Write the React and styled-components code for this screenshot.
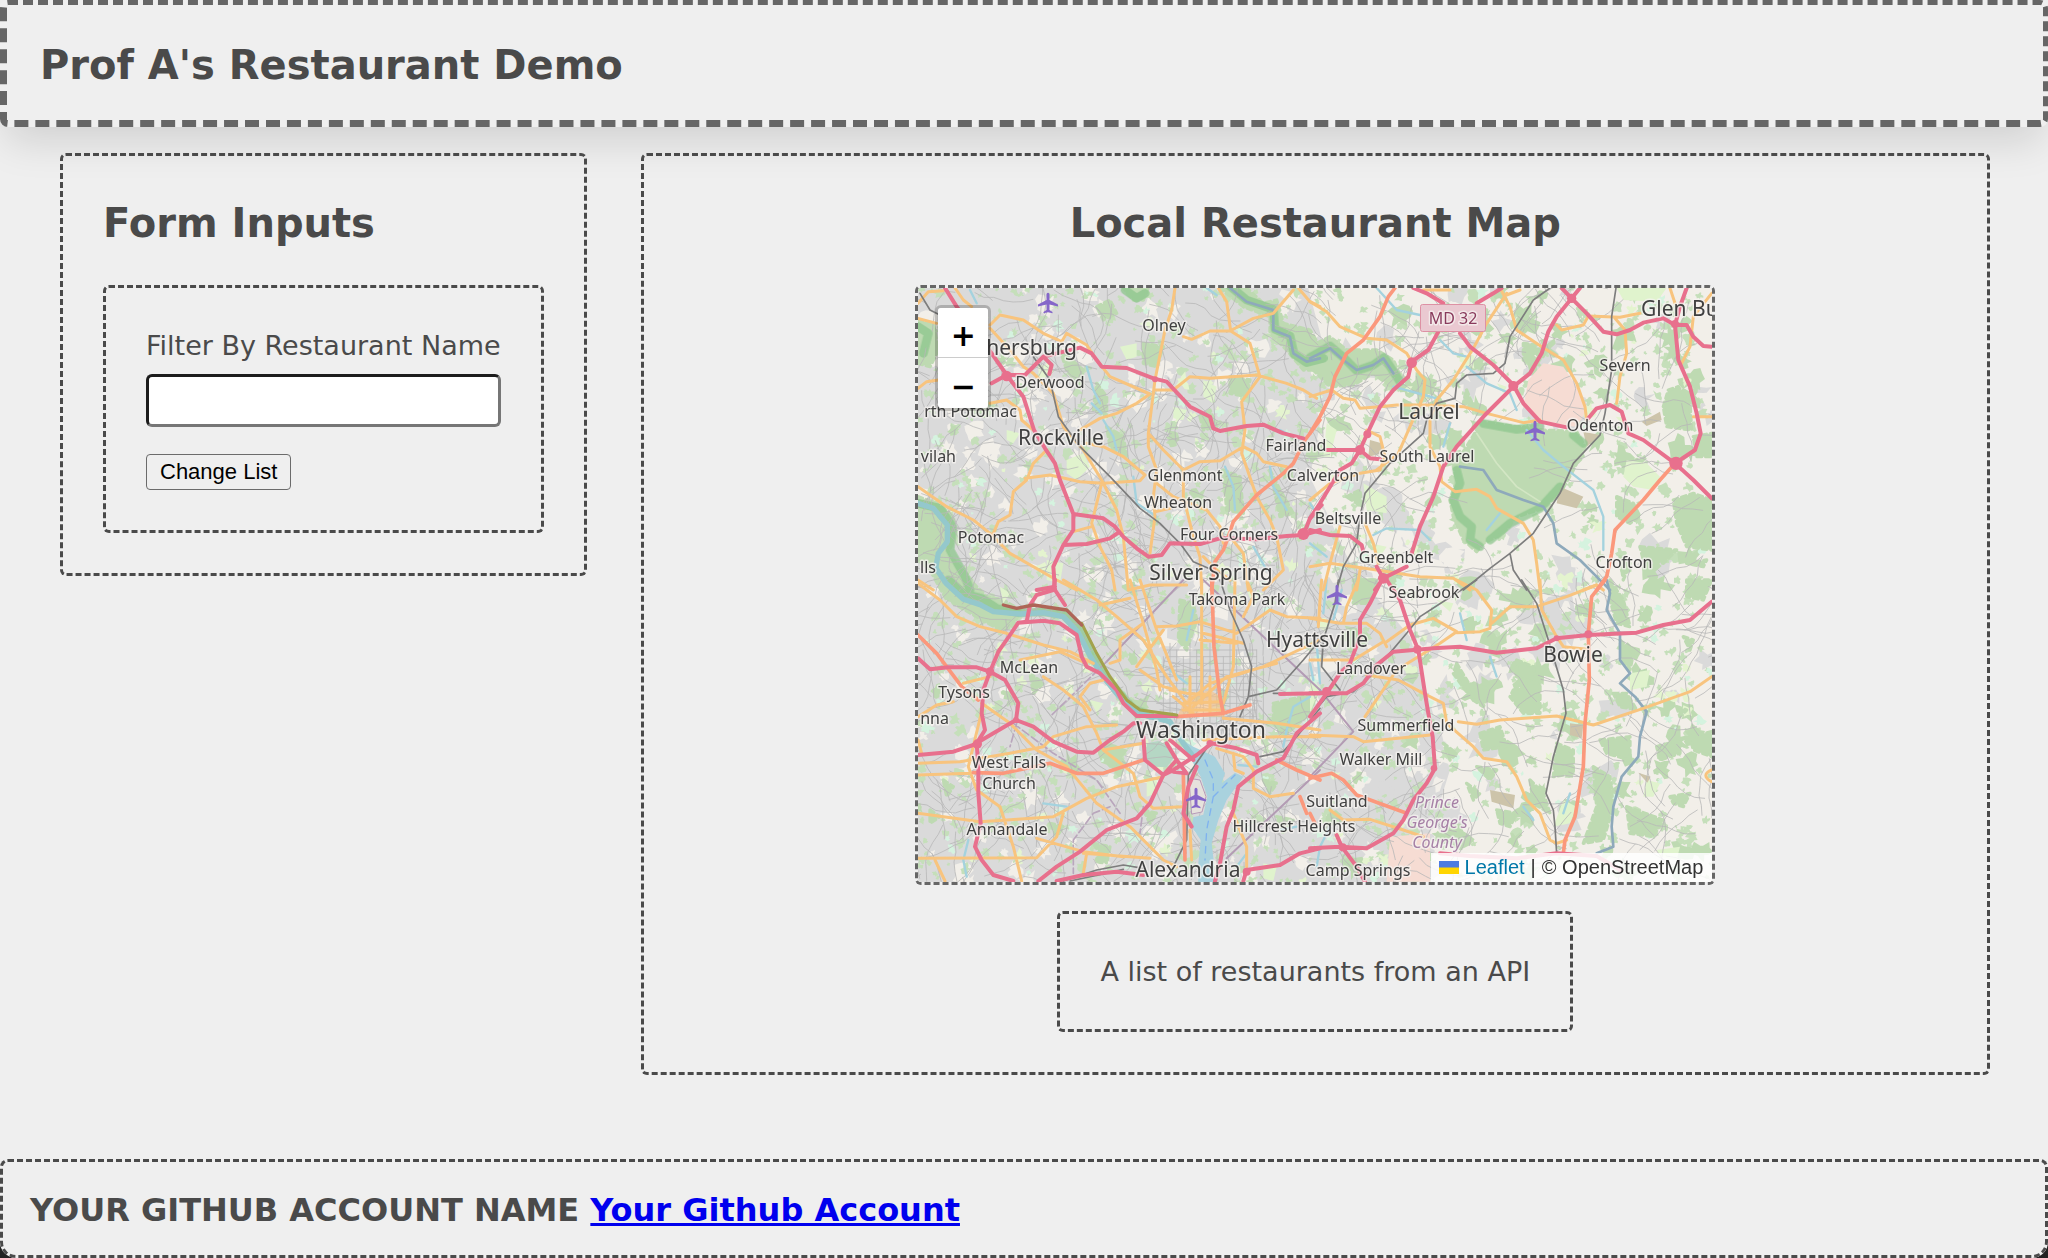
import React from "react";
import styled, { createGlobalStyle } from "styled-components";

const GlobalStyle = createGlobalStyle`
  * {
    box-sizing: border-box;
  }
  body {
    margin: 0;
    background: #222;
    color: #4a4a4a;
    font-family: Verdana, "DejaVu Sans", sans-serif;
    font-size: 27px;
    line-height: 35px;
  }
`;

const Page = styled.div`
  display: flex;
  flex-direction: column;
  min-height: 100vh;
  background: #efefef;
  border-radius: 0 0 16px 16px;
  overflow: hidden;
`;

const Header = styled.header`
  padding: 33px 33px 28px;
  border: 7px dashed #666;
  border-top-width: 5px;
  border-right-width: 5px;
  border-radius: 8px;
  box-shadow: 0 20px 40px -6px rgba(0, 0, 0, 0.13);
`;

const Title = styled.h1`
  margin: 0;
  font-size: 40px;
  line-height: 54px;
`;

const Heading = styled.h2`
  margin: 0 0 35px;
  font-size: 40px;
  line-height: 54px;
`;

const Main = styled.main`
  display: flex;
  align-items: flex-start;
  gap: 54px;
  padding: 26px 58px 26px 60px;
`;

const Box = styled.section`
  padding: 40px;
  border: 3px dashed #4a4a4a;
  border-radius: 6px;
`;

const FormBox = styled(Box)`
  flex: 0 0 526px;
`;

const MapBox = styled(Box)`
  flex: 1;
  display: flex;
  flex-direction: column;
  align-items: center;
`;

const Form = styled(Box).attrs({ as: "form" })`
  display: flex;
  flex-direction: column;
  align-items: flex-start;
`;

const Label = styled.label`
  margin-bottom: 11px;
  white-space: nowrap;
`;

const TextInput = styled.input`
  width: 100%;
  height: 53px;
  margin-bottom: 27px;
  padding: 0 8px;
  background: #fff;
  border: 3px solid #767676;
  border-top-color: #1c1c1c;
  border-left-color: #1c1c1c;
  border-radius: 6px;
  font: inherit;
`;

const SubmitButton = styled.button`
  height: 36px;
  padding: 0 13px;
  background: #efefef;
  border: 1px solid #6b6b6b;
  border-radius: 4px;
  color: #000;
  font-family: Arial, "Liberation Sans", sans-serif;
  font-size: 22px;
`;

const MapFrame = styled.div`
  position: relative;
  width: 100%;
  max-width: 800px;
  height: 600px;
  margin-bottom: 26px;
  border: 3px dashed #666;
  border-radius: 6px;
  overflow: hidden;

  > svg {
    display: block;
    width: 100%;
    height: 100%;
  }
`;

const ZoomControl = styled.div`
  position: absolute;
  top: 17px;
  left: 17px;
  display: flex;
  flex-direction: column;
  border: 3px solid rgba(0, 0, 0, 0.2);
  border-radius: 6px;
  background-clip: padding-box;
`;

const ZoomButton = styled.button`
  width: 50px;
  height: 50px;
  padding: 6px 0 0;
  background: #fff;
  border: 0;
  color: #000;
  font: bold 30px "DejaVu Sans", sans-serif;

  &:first-child {
    border-bottom: 1px solid #ccc;
    border-radius: 3px 3px 0 0;
  }
  &:last-child {
    border-radius: 0 0 3px 3px;
  }
`;

const Attribution = styled.div`
  position: absolute;
  right: 0;
  bottom: 0;
  display: flex;
  align-items: center;
  gap: 6px;
  height: 29px;
  padding: 0 9px 0 8px;
  background: rgba(255, 255, 255, 0.85);
  color: #333;
  font-family: Helvetica, "Liberation Sans", sans-serif;
  font-size: 20px;
  line-height: 29px;

  a {
    color: #0078a8;
    text-decoration: none;
  }
`;

const Footer = styled.footer`
  margin-top: auto;
  padding: 27px 27px 24px;
  border: 3px dashed #4a4a4a;
  border-radius: 8px 8px 16px 16px;
  font-size: 32px;
  font-weight: bold;
  line-height: 42px;

  a {
    color: #0000ee;
  }
`;

// Map geometry is drawn at three units to the pixel, in four tiles.
const tiles = [
  {
    x: 0,
    y: 0,
    forest:
      "M24 680L80 700L130 740L138 800L112 850L150 890L185 930L190 990L110 990L60 900L24 870Z M24 150L70 160L85 240L60 290L24 280Z M640 54L715 54L700 90L670 90Z M930 54L1010 54L1060 100L1100 90L1120 160L1200 180L1230 230L1230 300L1180 300L1130 240L1080 190L1080 140L1000 110Z M450 240L520 300L510 350L470 300Z M560 110L600 90L620 130L580 150Z M700 220L760 230L740 290L700 280Z M960 320L1020 330L1010 380L960 370Z M870 440L900 420L920 470L880 480Z M590 470L640 500L650 560L600 530Z M940 600L990 620L1000 730L950 720Z M1080 600L1110 660L1150 730L1110 740Z M180 400L260 410L230 440L180 430Z M560 340L590 380L590 440L550 420Z",
    park:
      "M470 570L520 550L540 590L500 630L470 610Z M410 870L460 880L450 940L410 930Z M290 480L330 490L310 520L290 510Z M630 230L680 220L680 260L650 270Z M880 330L920 350L910 400L880 380Z M790 410L830 420L820 450L790 445Z",
    deepGreen: "M24 700L90 715L128 770L120 840L165 920L180 960 M24 170L55 190L40 250 M645 60L680 85L705 70 M950 40L1010 90L1090 118L1095 178L1140 198L1152 252L1190 278L1240 265",
    water: "M24 700L70 715L112 765L112 815L85 850L78 890",
    stream:
      "M530 290L550 360L570 400M580 450L610 500L620 540M670 620L680 700L740 740M945 590L970 650L975 720M1110 480L1150 500M1080 590L1090 650L1130 720M180 60L200 100M1030 830L1070 900M890 54L920 75M545 400L575 430",
    river: "M960 54L1010 95L1090 120L1090 180L1140 200L1150 250L1190 275L1230 265",
    rail: "M370 260L420 330L445 440L510 530L600 620L690 715L750 760L810 820L850 875L930 910M30 70L60 120L100 140",
    primary:
      "M24 100L55 65L100 62M135 54L160 90L185 110M240 165L270 135L340 150L400 190L455 215M240 175L300 240L340 290L370 310L430 370L460 470L520 540L575 630L620 720L640 800L655 960M455 215L470 190L530 225L560 270L600 320L720 372M795 54L785 120L765 180L735 330L715 490L760 540L820 600L820 680L850 800L870 860L875 960M715 490L715 530L740 600L730 680L735 740L720 850M720 372L680 400L620 430L570 445L510 480M735 360L790 360L840 320L900 325L1040 315L1130 340L1180 360L1220 385M820 200L845 208L900 183L960 183L1030 145L1090 130L1150 60M925 54L950 95L962 183L1020 220L1050 320L995 395L1005 480L995 550L1040 680L1080 750L1100 800L1120 900L1060 960M820 600L870 575L930 572L1000 530L1040 550L1060 575L1130 590M345 625L420 615L510 635L580 640L690 632L705 615L640 560L580 530L530 520M405 545L370 580L350 630L310 665L300 735L265 755L250 790M24 650L110 710L190 750L240 790L300 850L440 930L500 960M24 355L50 335L85 330M240 400L290 390L330 420L335 450L370 480M575 640L545 760L570 830L605 900L615 960M545 770L490 785M24 145L80 160M24 930L70 960M740 640L790 680L890 720L930 770L940 820M880 860L920 900L960 930M960 800L1000 850L1015 960M735 725L780 715M1165 54L1200 95L1230 110M655 960L720 945L830 945",
    trunk: "M1230 450L1185 510L1150 580L1120 610L1040 675L970 755L955 800L940 840L915 875L905 960",
    motorway:
      "M105 54L140 110L245 250L290 315L340 380L372 480L405 535L435 580L450 630L490 732L490 780L460 825L430 890L435 960M490 732L580 745L615 770L640 800L680 835L715 860L755 855L780 820L870 822L930 805L1040 808L1130 798L1180 795L1230 780M460 825L530 822L600 805L625 788M245 340L290 315L345 315L400 260L440 250L510 233L545 250L575 290L650 294L730 325L770 335L840 410L900 440L910 475L930 483L1010 468L1060 464L1120 490L1180 505M400 260L425 285L418 312M1180 795L1200 745L1235 705M380 960L435 950",
    junctions: [[290, 318, 16], [1180, 792, 18], [735, 328, 9]],
  },
  {
    x: 1200,
    y: 0,
    forest:
      "M430 590L470 530L515 455L620 470L700 480L800 485L825 530L790 600L750 670L700 715L620 740L580 790L520 820L500 845L460 810L430 740L420 690L440 630Z M1060 410L1075 360L1105 350L1140 400L1145 480L1070 470Z M1090 690L1150 670L1205 690L1205 840L1130 830L1100 760Z M0 230L60 200L110 240L200 240L250 270L285 350L250 355L190 310L130 345L60 350L0 290Z M640 220L680 225L665 290L640 270Z M470 110L530 120L510 200L470 170Z M1150 500L1205 490L1205 560L1160 560Z M920 680L970 700L990 740L960 760L920 740Z M990 830L1100 840L1060 880L1000 870Z M930 860L960 880L940 930Z M110 680L150 660L155 710Z M470 360L490 410L460 400Z M150 930L200 930L190 960L140 960Z M790 500L820 560L800 580Z M1130 880L1190 870L1180 890Z",
    park:
      "M160 640L230 680L230 730L170 720Z M180 820L230 830L210 860Z M50 460L80 480L60 560L40 560Z M920 54L1070 54L1040 95L940 90Z M560 340L590 350L580 370Z M950 570L1010 580L1050 620L1030 660L970 650L940 620Z",
    barracks: "M655 330L700 280L760 290L800 350L830 420L800 470L700 460L640 410Z",
    brown: "M820 485L870 495L830 530Z M995 455L1050 425L1055 450L1010 468Z M750 650L820 680L800 715L740 700Z M180 510L215 520L220 550L175 560Z",
    deepGreen:
      "M0 262L60 228L100 262L140 302L190 285L222 262L270 335M520 460L620 478L690 470M440 600L450 640L430 690L450 740L485 770L480 810L510 830M540 810L600 760L690 715L750 650M790 495L820 520",
    track: "M500 490L560 580L620 650L690 695",
    stream:
      "M200 54L260 120L330 135M390 210L430 250L470 260M470 290L530 340L600 370L620 420M650 480L700 540L760 590L850 660L880 740L880 840M420 460L400 530M190 795L230 775L330 780L360 810M0 820L50 860M530 780L570 730M0 700L20 730M250 350L380 385",
    river: "M0 265L60 235L100 270L140 300L190 285L220 265L250 310M450 590L520 600L560 660L640 690L700 710L730 760L740 820L810 870L880 940L900 960",
    rail:
      "M720 54L670 90L600 200L585 280L550 310L470 315L440 340L435 385L380 400L350 450L340 490L240 580L165 670L150 740L140 820L100 890L80 960M918 54L905 140L905 300L885 430L870 495L790 580L750 670L670 790L600 850L540 895L460 960M600 850L610 900L650 960",
    primary:
      "M0 95L50 125L90 170L170 205L230 210L290 250L320 300L345 330L340 380L300 470L265 550L200 600M590 70L530 160L490 235L430 330L380 390L360 450L360 530L390 590L395 635L435 665L500 658L540 680L560 715L640 760L670 810L680 880L690 960M570 54L600 110L620 180L695 230L760 270L800 340L825 410L830 450M630 60L590 75M0 380L65 360L100 385L135 390L150 415L210 410L260 405L340 405L460 410L530 430L640 458L690 450M740 165L755 180L820 165L835 138L930 142L990 130M915 145L945 180L950 250L930 320L920 400M1080 54L1095 100M1205 70L1150 140L1140 230L1115 280M1150 440L1205 440M170 480L210 500L225 560L210 600L150 610L60 640L0 690M165 760L190 820L205 880M0 890L60 880L200 900L330 920L430 925L480 960M60 880L90 770M60 880L40 960M150 900L140 960M820 960L860 945L880 960M340 60L420 60",
    trunk: "M255 54L235 80L210 140L160 210L110 250L75 320L60 380L30 440L0 490M1095 580L1050 630L1000 690L915 780L905 850L890 920L860 960",
    motorway:
      "M575 54L550 70L500 100M400 100L350 70L310 54M385 185L355 240L305 275L295 320L250 360L210 410L170 495L150 540L125 580L90 600L60 650L30 700L0 745M50 540L150 540L180 565L210 568M450 190L480 230L550 285L610 345L640 400L690 455L770 472M835 445L860 415L900 405L935 425L955 490L1000 510L1095 580L1150 630L1205 685M785 85L740 140L715 185L695 250L660 310L610 350L525 435L440 530L400 590L370 680L330 770L305 850M755 54L785 85L810 54M785 85L830 130L880 185L920 193L960 180L1000 158L1060 145L1095 165L1130 165L1150 200L1180 228L1205 230M1130 54L1110 110L1095 165L1105 270L1140 350L1160 430L1172 490L1155 540L1095 580M0 780L60 795L120 798L155 825L160 845M200 890L220 925L290 890M220 925L195 960",
    junctions: [[305, 278, 16], [150, 540, 15], [610, 348, 15], [1098, 580, 20], [1095, 162, 12], [785, 85, 14], [220, 925, 16], [172, 493, 12]],
  },
  {
    x: 0,
    y: 930,
    forest:
      "M90 0L180 0L230 50L280 60L330 90L310 140L270 150L200 110L130 70Z M810 60L850 70L860 120L830 210L805 180Z M360 280L400 310L370 340Z M1090 370L1220 340L1200 400L1120 470L1090 430Z M100 600L130 620L110 650Z M60 690L90 710L60 730Z M420 730L460 740L440 770Z M640 20L670 10L680 50Z M550 790L600 800L590 850Z M1060 600L1100 610L1080 640Z M600 550L640 560L630 590Z M700 690L740 700L720 730Z M1100 710L1150 720L1120 760Z",
    park: "M270 20L300 40L280 70Z M710 600L740 590L740 640L710 650Z M540 360L580 370L560 400Z M1060 850L1100 860L1090 903L1060 895Z M1010 30L1060 40L1030 80Z M890 530L925 570L915 610L895 580Z",
    cemetery: "M710 490L745 483L785 500L790 535L770 562L735 560L708 535Z",
    airfield: "M838 595L870 600L888 650L876 696L846 702Z",
    deepGreen: "M115 0L160 40L215 55L260 85L330 98L400 95L460 104L512 155L548 225L584 285L628 340L672 388L720 405",
    water: "M75 -40L108 10L160 58L210 74L250 95L330 102L400 98L460 110L505 158L540 228L578 288L622 343L668 391L720 410L780 425L820 490L850 530",
    waterArea:
      "M800 470L850 500L915 530L945 580L935 610L975 578L1000 590L950 660L925 720L905 790L912 850L912 910L865 910L865 850L872 780L845 740L850 712L880 704L892 650L872 590L850 550Z",
    stream: "M1200 350L1150 380L1130 450L1120 500M985 555L1040 560M830 180L850 90M175 780L160 840L170 890M400 670L470 680M780 270L830 310M1110 750L1160 740M980 860L1010 820",
    rail:
      "M930 0L960 90L1000 180L1025 260L1015 350L990 410M1015 350L1100 330L1180 240L1230 180M1090 340L1230 340M1230 385L1160 470L1120 515L1050 530M890 505L835 585L830 780L795 850M460 903L560 870L640 855L700 865M480 903L580 882L640 868",
    border: "M820 0L590 245M880 0L1230 330M1230 570L950 835",
    borderDashed: "M590 245L420 410M320 430L300 500M310 430L430 520L560 600L630 700M600 680L550 700L490 780L490 880M700 680L690 760",
    primary:
      "M24 10L90 60L140 110L210 140L290 160L400 195L480 215L550 250M460 0L560 60L620 110L700 180L770 290L830 370M570 75L660 55M660 0L700 130L740 270L750 330M690 0L740 150L800 300M740 140L800 138L870 125L980 160L1080 90L1130 110L1230 115M875 0L875 370M975 0L970 260L940 370M600 250L630 240L630 180L700 130M680 260L760 150M830 370L900 310L1060 260L1230 180M850 380L950 290L1100 250M780 330L830 340L900 345M880 160L1000 190M940 415L1100 430L1230 450M880 480L1100 470L1230 470M330 240L450 215L530 250M400 290L460 330L520 380L560 460L580 510L670 580L690 650L730 685L820 680M580 300L540 310L510 350L540 390M215 370L300 430L380 510L470 560L560 670L660 740L760 840L800 860M24 550L150 545L300 520L400 500L430 470L530 440L620 435M24 585L180 580M215 395L175 560L200 630L270 680L310 800L335 903M24 700L210 725L290 720L430 710L530 655L620 620L760 590M24 835L380 833L440 770L460 700M75 840L105 903M380 775L520 815L640 830M530 820L520 880M520 820L720 835M24 480L35 520M24 410L80 375L130 365M240 290L160 310M920 505L1000 530L1030 570L1030 625L1080 650L1150 640M970 520L975 570L1000 580M970 700L1010 800L1010 860M840 750L845 840M580 510L700 490M790 350L850 400M840 290L840 400M900 290L900 400M820 390L940 390M820 370L930 365M870 180L980 190M1010 0L1030 50L1000 110M690 270L760 320L800 330",
    downtown: "M840 345L900 330L935 352L945 410L800 412L815 380Z",
    trunk:
      "M24 165L80 220L155 320L205 360M190 578L280 580L420 550L500 580L580 580L700 540M905 0L912 200L930 350L940 400L800 410M940 400L1020 375M820 580L825 840M1100 540L1160 570L1230 600M1170 650L1190 700",
    motorway:
      "M435 0L430 30L380 45L360 75L350 125L325 128L300 165L265 215L240 275L220 330L215 400L225 450L200 490L205 560L205 640L212 730L195 800L215 840L250 885L310 903M435 30L465 75M325 128L400 122L450 130L500 165L515 230L530 260L570 280L620 330L640 370L680 408L800 408M24 235L60 268L115 262L200 262L240 275L285 300L325 370L318 420L370 440L430 485L500 515L550 518L600 480L640 455L670 430L690 430M24 525L130 515L190 495L250 460L318 420M385 903L440 860L510 815L590 750L680 715L720 670L760 585L790 570L860 525L905 490L980 505L1040 525L1045 550M700 470L705 540L760 585L800 540L770 490M800 540L830 580L790 575M860 560L835 620L820 700L845 740M930 850L950 740L970 690L985 620L1040 575L1120 535L1160 460L1230 400M1110 342L1230 340M440 903L520 885L620 875L700 885M930 850L915 903M1000 903L1010 870L1110 855L1170 820L1230 805M780 480L850 540",
    junctions: [[240, 275, 13], [202, 492, 14], [900, 490, 10], [318, 420, 9], [1010, 875, 12]],
    canal: "M515 130L560 220L600 290L650 360L690 390L800 405",
    canalNorth: "M280 75L320 85L370 75L470 90L515 135",
  },
  {
    x: 1200,
    y: 930,
    forest:
      "M620 240L670 260L680 310L620 290Z M610 330L690 300L690 400L640 400L600 350Z M740 490L790 510L790 580L730 590Z M510 460L570 440L590 500L520 510Z M850 560L900 590L910 680L880 780L820 790L860 680Z M870 480L960 470L960 540L890 520Z M1140 470L1205 455L1205 530L1150 510Z M1040 500L1110 480L1110 520L1050 540Z M950 680L1060 720L1030 770L960 760Z M900 0L940 60L960 140L920 130L900 60Z M1130 0L1205 0L1180 60L1130 50Z M130 0L200 0L180 70L130 70Z M930 180L970 220L960 270L935 240Z M910 340L950 340L980 390L930 380Z M1080 650L1140 640L1120 680L1090 670Z M660 600L700 640L720 700L670 670Z M470 610L510 640L490 660Z M1120 170L1150 180L1140 210Z M800 80L850 70L850 110L800 100Z M500 560L560 570L540 600Z M1100 380L1130 390L1110 410Z M490 310L540 330L520 380L490 360Z M440 250L500 350L480 350L430 280Z M560 690L620 700L600 740L570 730Z M400 490L440 520L420 540Z",
    park: "M960 280L1020 270L1010 320L960 330Z M760 660L800 680L780 730L730 740Z M1010 600L1050 610L1030 650L1000 650Z M1040 810L1110 800L1100 840L1050 830Z M0 300L30 320L0 400Z M380 60L430 70L420 95Z",
    brown: "M540 630L615 645L610 685L545 665Z M985 578L1022 590L1012 608Z M780 430L820 435L815 475L780 465Z",
    barracks: "M240 770L360 760L360 905L230 905Z",
    stream:
      "M20 190L30 310M50 0L40 100M60 740L30 800L20 860M450 100L470 180M540 230L560 290M640 680L670 720M780 640L760 700M0 250L10 300M95 30L70 120",
    river: "M890 0L900 40L890 90L930 160L930 240L960 280L930 310L975 350L1010 395L990 470L985 530L935 590L910 680L905 740L910 800L860 820",
    rail:
      "M85 0L75 70L40 180L35 260L90 330M500 0L330 110L290 160L180 290L130 335L50 350L0 410M635 0L680 70L715 180L760 330L768 400L730 530L708 640L730 690L735 740L740 820",
    border: "M30 330L130 455L0 590",
    primary:
      "M0 115L90 130L170 130L210 160L230 200M35 0L30 60L25 140M145 0L110 80L100 130M230 185L300 135L370 115L440 155L390 190L260 270L165 410M440 0L500 30L545 90L540 145L510 155L440 158M690 0L695 90L740 170L760 200L830 208M545 130L600 80L680 80L770 50L860 15M170 285L265 300L340 340L400 370L410 430L490 500L520 535L590 545L620 590L650 660L690 700L720 780L740 790L770 780M445 425L500 433L570 420L740 408L850 435L1000 385L1140 335L1205 290M0 465L130 470L160 485L360 465M0 240L130 240L220 185M60 690L100 720L180 718L280 750L340 770M1205 570Q1170 585 1205 605",
    trunk: "M885 0L845 50L835 160L838 300L825 430L820 560L795 710L765 780L760 820M0 595L65 580L100 600L140 645L290 700M0 700L15 730",
    motorway:
      "M215 0L180 70L150 120L150 170L120 250L90 280L50 340L0 410M230 0L270 60L300 150L325 210L345 340L355 400L368 470L375 565L350 610L310 660L280 720L250 760L170 805L90 800L0 805M95 800L140 860L165 905M80 765L95 800M0 340L110 340L160 310L200 255L250 215L370 205L450 200L560 218L680 205L740 175L835 165L980 158L1060 135L1140 120L1205 65M390 820L480 828L620 835L740 820L860 828L930 870",
    junctions: [[322, 208, 13], [50, 335, 14], [835, 163, 12], [98, 802, 12], [372, 565, 10], [740, 175, 9]],
  },
];

// Bottom to top. Widths are in the same three-to-the-pixel units.
const layers = [
  { kind: "forest", fill: "#bedab2", stroke: "#bedab2", width: 10, dash: "14 12" },
  { kind: "park", fill: "#e0f3cd" },
  { kind: "barracks", fill: "#f6dcd3" },
  { kind: "brown", fill: "#cdc4aa" },
  { kind: "cemetery", fill: "#b5d7c4" },
  { kind: "deepGreen", stroke: "#8dc68d", width: 26, opacity: 0.75 },
  { kind: "track", stroke: "#d3e6c4", width: 5 },
  { kind: "streets" },
  { kind: "waterArea", fill: "#a9d2de" },
  { kind: "airfield", fill: "#e6e2dc", stroke: "#b79bb8", width: 3 },
  { kind: "water", stroke: "#94c8cc", width: 16 },
  { kind: "stream", stroke: "#a4d2de", width: 7 },
  { kind: "river", stroke: "#8ea9bb", width: 8 },
  { kind: "border", stroke: "#b39bb4", width: 6 },
  { kind: "borderDashed", stroke: "#b9a6bc", width: 5, dash: "24 10" },
  { kind: "downtown", fill: "#f9c083", opacity: 0.6 },
  { kind: "primary", stroke: "#f8c47e", width: 9 },
  { kind: "rail", stroke: "#7d7d7d", width: 5 },
  { kind: "trunk", stroke: "#fb987c", width: 11 },
  { kind: "motorway", stroke: "#e8708d", width: 12 },
  { kind: "canal", stroke: "#a3a24c", width: 9 },
  { kind: "canalNorth", stroke: "#ae6557", width: 10 },
];

const labels = [
  ["Olney", 246, 43],
  ["Derwood", 132, 100],
  ["rth Potomac", 99, 129, "end"],
  ["vilah", 38, 174, "end"],
  ["Potomac", 73, 255],
  ["lls", 18, 285, "end"],
  ["Glenmont", 267, 193],
  ["Wheaton", 260, 220],
  ["Four Corners", 311, 252],
  ["Fairland", 378, 163],
  ["Calverton", 405, 193],
  ["Beltsville", 430, 236],
  ["South Laurel", 509, 174],
  ["Odenton", 682, 143],
  ["Severn", 707, 83],
  ["Greenbelt", 478, 275],
  ["Crofton", 706, 280],
  ["Takoma Park", 319, 317],
  ["McLean", 111, 385],
  ["Tysons", 46, 410],
  ["nna", 31, 436, "end"],
  ["West Falls", 91, 480],
  ["Church", 91, 501],
  ["Annandale", 89, 547],
  ["Hillcrest Heights", 376, 544],
  ["Suitland", 419, 519],
  ["Camp Springs", 440, 588],
  ["Walker Mill", 463, 477],
  ["Summerfield", 488, 443],
  ["Landover", 453, 386],
  ["Seabrook", 506, 310],
];

const cityLabels = [
  ["hersburg", 159, 67, "end"],
  ["Rockville", 143, 157],
  ["Silver Spring", 293, 292],
  ["Laurel", 511, 131],
  ["Glen Bu", 723, 28, "start"],
  ["Bowie", 655, 374],
  ["Hyattsville", 399, 359],
  ["Alexandria", 270, 589],
];

const airports = [
  [130, 15],
  [617, 143],
  [278, 510],
  [419, 307],
];

const PlaceName = styled.text`
  fill: ${(props) => props.$color || "#404040"};
  stroke: rgba(245, 243, 240, 0.75);
  stroke-width: 3px;
  stroke-linejoin: round;
  paint-order: stroke;
  font-family: "Noto Sans", sans-serif;
  font-size: ${(props) => props.$size || 16}px;
  font-style: ${(props) => (props.$italic ? "italic" : "normal")};
  text-anchor: ${(props) => props.$anchor || "middle"};
`;

// Small seeded generator so the side streets come out the same every time.
const makeRandom = (seed) => () => {
  seed = (seed * 16807) % 2147483647;
  return seed / 2147483647;
};

const blob = (random, x, y, size) => {
  const points = [];
  const count = 14;
  for (let i = 0; i < count; i++) {
    const angle = (i / count) * Math.PI * 2;
    const radius = size * (0.35 + random() * 0.9);
    points.push(
      `${Math.round(x + Math.cos(angle) * radius)} ${Math.round(y + Math.sin(angle) * radius)}`
    );
  }
  return `M${points.join("L")}Z`;
};

const scatter = (seed, count, minSize, maxSize, weight) => {
  const random = makeRandom(seed);
  let d = "";
  for (let i = 0; i < count; i++) {
    const x = 24 + random() * 2382;
    const y = 54 + random() * 1782;
    if (random() < weight(x, y)) {
      d += blob(random, x, y, minSize + random() * (maxSize - minSize));
    }
  }
  return d;
};

const streets = (() => {
  const random = makeRandom(4217);
  let d = "";
  for (let i = 0; i < 1100; i++) {
    let x = 24 + random() * 2382;
    let y = 54 + random() * 1782;
    if (x > 1300 && random() < 0.4) continue;
    if (x > 1600 && x < 2030 && y > 430 && y < 860) continue;
    let angle = Math.round(random() * 8) * (Math.PI / 4) + random() * 0.5;
    d += `M${Math.round(x)} ${Math.round(y)}`;
    for (let j = 0; j < 6; j++) {
      angle += (random() - 0.5) * 0.9;
      x += Math.cos(angle) * 30;
      y += Math.sin(angle) * 30;
      d += `L${Math.round(x)} ${Math.round(y)}`;
    }
  }
  // street grid of the city centre
  for (let x = 760; x < 1080; x += 20) d += `M${x} ${1120 + ((x * 7) % 60)}V${1370 + ((x * 3) % 50)}`;
  for (let y = 1140; y < 1400; y += 20) d += `M${740 + ((y * 3) % 50)} ${y}H${1040 + ((y * 7) % 70)}`;
  return d;
})();

// Built-up land gets thinner towards the east side of the map.
const east = (x) => (x > 1500 ? 1 : x > 1200 ? 0.5 : 0.15);
const landCover = [
  { fill: "#dadada", d: scatter(91, 480, 25, 75, (x) => (x > 2000 ? 0.15 : x > 1300 ? 0.5 : 0.2)) },
  { fill: "#f2efe9", d: scatter(17, 700, 8, 36, (x) => 0.8 - east(x) / 3) },
  { fill: "#c5dfba", d: scatter(53, 2400, 5, 18, () => 0.7) },
  { fill: "#bedab2", d: scatter(29, 420, 16, 44, (x) => east(x) * 0.6) },
  { fill: "#d5f3df", d: scatter(71, 340, 5, 20, () => 0.6) },
  { fill: "#e4f4cf", d: scatter(37, 170, 6, 26, () => 0.6) },
];

const MapLayer = ({ kind, fill = "none", stroke, width, opacity, dash }) => (
  <g fill={fill} stroke={stroke} strokeWidth={width} opacity={opacity} strokeDasharray={dash}>
    {tiles
      .filter((tile) => tile[kind])
      .map((tile) => (
        <path key={`${tile.x}-${tile.y}`} d={tile[kind]} transform={`translate(${tile.x} ${tile.y})`} />
      ))}
  </g>
);

const RestaurantMap = () => (
  <svg viewBox="0 0 794 594" preserveAspectRatio="xMidYMid slice" role="img" aria-label="Map">
    <g transform="translate(-8 -18) scale(0.33333)" strokeLinejoin="round" strokeLinecap="round">
      <path d="M0 0H2440V1880H0Z" fill="#f2efe9" />
      <path d="M0 0H1180L1260 300L1200 620L1330 900L1500 1100L1620 1500L1500 1880H0Z" fill="#dadada" />
      {landCover.map((cover) => (
        <path key={cover.fill} d={cover.d} fill={cover.fill} />
      ))}
      {layers.map((layer) =>
        layer.kind === "streets" ? (
          <path key="streets" d={streets} fill="none" stroke="#b8b8b8" strokeWidth="2.4" />
        ) : (
          <MapLayer key={layer.kind} {...layer} />
        )
      )}
      <path
        d="M885 1470L910 1530L910 1580L890 1680L885 1770M910 1580L950 1540L975 1515"
        fill="none"
        stroke="#7fb2ef"
        strokeWidth="4"
        strokeDasharray="20 18"
      />
      {tiles.map((tile) =>
        tile.junctions.map(([x, y, r]) => (
          <circle key={`${tile.x}-${x}-${y}`} cx={tile.x + x} cy={tile.y + y} r={r} fill="#e8708d" />
        ))
      )}
    </g>
    {airports.map(([x, y]) => (
      <path
        key={x}
        transform={`translate(${x - 12} ${y - 12})`}
        fill="#8566c9"
        d="M22 15.500v-2l-8.500-4.500V3.500c0-.8-.7-1.800-1.500-1.800s-1.500 1-1.500 1.800V9L2 13.500v2l8.500-2V19l-3 2v1.300l4.500-1 4.500 1V21l-3-2v-5.500z"
      />
    ))}
    <rect x="502.500" y="16.500" width="65" height="27" rx="2" fill="#eac9d1" stroke="#dd91a4" />
    <PlaceName $color="#893a5c" x="535" y="36">
      MD 32
    </PlaceName>
    {labels.map(([name, x, y, anchor]) => (
      <PlaceName key={name} x={x} y={y} $anchor={anchor}>
        {name}
      </PlaceName>
    ))}
    {cityLabels.map(([name, x, y, anchor]) => (
      <PlaceName key={name} x={x} y={y} $anchor={anchor} $size={21}>
        {name}
      </PlaceName>
    ))}
    <PlaceName x="283" y="450" $size={23}>
      Washington
    </PlaceName>
    {["Prince", "George's", "County"].map((word, i) => (
      <PlaceName key={word} x="519" y={520 + i * 20} $color="#a680a6" $italic>
        {word}
      </PlaceName>
    ))}
  </svg>
);

const Flag = () => (
  <svg width="20" height="13" viewBox="0 0 20 13" aria-hidden="true">
    <path fill="#4c7be1" d="M0 0h20v7H0z" />
    <path fill="#ffd500" d="M0 6.500h20V13H0z" />
  </svg>
);

const App = () => {
  return (
    <>
      <GlobalStyle />
      <Page>
        <Header>
          <Title>Prof A's Restaurant Demo</Title>
        </Header>

        <Main>
          <FormBox>
            <Heading>Form Inputs</Heading>
            <Form onSubmit={(event) => event.preventDefault()}>
              <Label htmlFor="resto">Filter By Restaurant Name</Label>
              <TextInput id="resto" name="resto" type="text" />
              <SubmitButton type="submit">Change List</SubmitButton>
            </Form>
          </FormBox>

          <MapBox>
            <Heading>Local Restaurant Map</Heading>
            <MapFrame>
              <RestaurantMap />
              <ZoomControl>
                <ZoomButton type="button" aria-label="Zoom in">
                  +
                </ZoomButton>
                <ZoomButton type="button" aria-label="Zoom out">
                  −
                </ZoomButton>
              </ZoomControl>
              <Attribution>
                <Flag />
                <a href="https://leafletjs.com">Leaflet</a>
                <span>|</span>
                <span>© OpenStreetMap</span>
              </Attribution>
            </MapFrame>
            <Box as="div">A list of restaurants from an API</Box>
          </MapBox>
        </Main>

        <Footer>
          YOUR GITHUB ACCOUNT NAME <a href="https://github.com">Your Github Account</a>
        </Footer>
      </Page>
    </>
  );
};

export default App;
